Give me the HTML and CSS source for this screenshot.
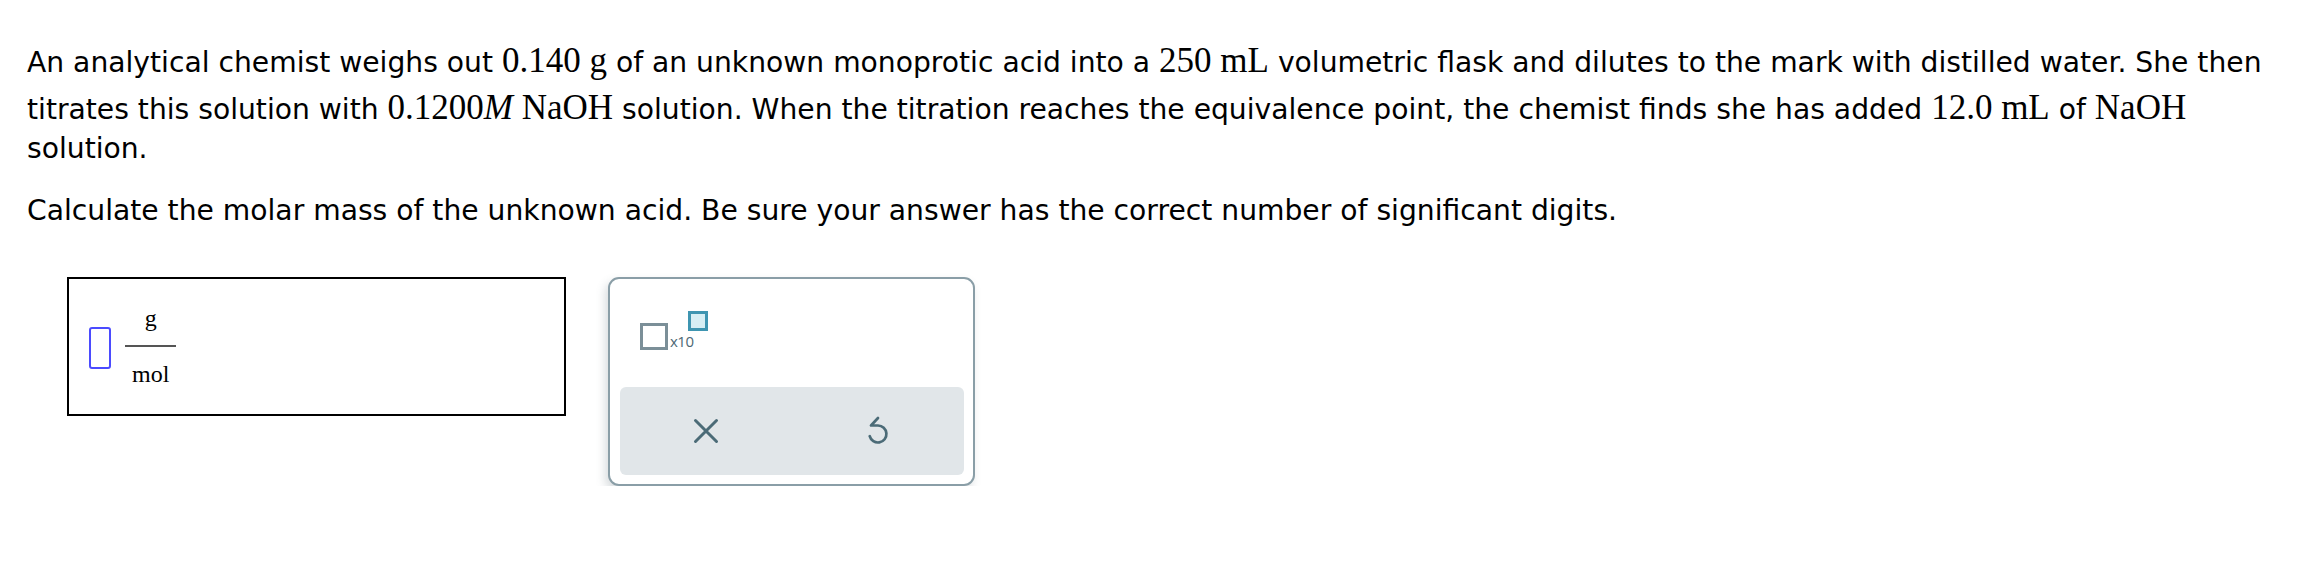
FILE: index.html
```html
<!DOCTYPE html>
<html>
<head>
<meta charset="utf-8">
<link rel="stylesheet" href="styles.css">
</head>
<body>
<div class="page">
  <div class="question">
    <p>An analytical chemist weighs out <span class="m deep">0.140&nbsp;g</span> of an unknown monoprotic acid into a <span class="m">250&nbsp;mL</span> volumetric flask and dilutes to the mark with distilled water. She then titrates this solution with <span class="m">0.1200<i>M</i>&nbsp;NaOH</span> solution. When the titration reaches the equivalence point, the chemist finds she has added <span class="m">12.0&nbsp;mL</span> of <span class="m">NaOH</span> solution.</p>
    <p>Calculate the molar mass of the unknown acid. Be sure your answer has the correct number of significant digits.</p>
  </div>
  <div class="answer-row">
    <div class="answer-box">
      <span class="slot"></span>
      <span class="frac">
        <span class="num">g</span>
        <span class="den">mol</span>
      </span>
    </div>
    <div class="toolbox">
      <div class="tool-top">
        <div class="sci">
          <span class="base-sq"></span>
          <span class="x10">x10</span>
          <span class="exp-sq"></span>
        </div>
      </div>
      <div class="actions">
        <button class="act" aria-label="clear">
          <svg width="26" height="26" viewBox="0 0 26 26"><path d="M2.5 2.5 L23.5 23.5 M23.5 2.5 L2.5 23.5" stroke="#4b6b77" stroke-width="3" stroke-linecap="round" fill="none"/></svg>
        </button>
        <button class="act" aria-label="undo">
          <svg width="30" height="30" viewBox="4.5 4 30 30"><path d="M19.5 6 L12.5 13.5 H19.5 A8.5 8.5 0 1 1 11.2 24.2" stroke="#4b6b77" stroke-width="2.7" stroke-linecap="round" stroke-linejoin="round" fill="none"/></svg>
        </button>
      </div>
    </div>
  </div>
</div>
</body>
</html>
```

FILE: styles.css
```css
html, body {
  margin: 0;
  padding: 0;
  background: #ffffff;
}

.page {
  padding: 43px 27px 0 27px;
  font-family: "DejaVu Sans", Verdana, sans-serif;
  font-size: 28.2px;
  color: #000;
}

.question p {
  margin: 0 0 23px 0;
  line-height: 39px;
}

.m {
  font-family: "Liberation Serif", "Times New Roman", serif;
  font-size: 35px;
  line-height: 1;
}

.m i {
  font-style: italic;
}

.m.deep {
  display: inline-block;
  padding-bottom: 12px;
}

.answer-row {
  display: flex;
  align-items: flex-start;
  margin-top: 47px;
  padding-left: 40px;
  gap: 42px;
}

.answer-box {
  box-sizing: border-box;
  width: 499px;
  height: 139px;
  border: 2px solid #000;
  display: flex;
  align-items: center;
  padding-left: 20px;
}

.slot {
  box-sizing: border-box;
  width: 22px;
  height: 42px;
  border: 2px solid #4b4bff;
  border-radius: 3px;
  margin-top: 3px;
}

.frac {
  display: inline-flex;
  flex-direction: column;
  align-items: stretch;
  margin-left: 14px;
  font-family: "Liberation Serif", "Times New Roman", serif;
  font-size: 24px;
}

.num {
  display: block;
  line-height: 27px;
  padding-bottom: 13px;
  border-bottom: 2px solid #555;
  text-align: center;
}

.den {
  display: block;
  line-height: 27px;
  padding: 14px 7px 0 7px;
  text-align: center;
}

.toolbox {
  box-sizing: border-box;
  width: 367px;
  height: 209px;
  border: 2px solid #8a9ea7;
  border-radius: 11px;
  background: #fff;
  box-shadow: -3px 5px 10px rgba(80, 100, 110, 0.22);
  display: flex;
  flex-direction: column;
  padding: 0 9px 9px 10px;
}

.tool-top {
  flex: 1;
  padding: 32px 0 0 20px;
}

.sci {
  position: relative;
  display: flex;
  align-items: flex-end;
  height: 39px;
}

.base-sq {
  box-sizing: border-box;
  width: 28px;
  height: 27px;
  border: 3px solid #7b8f98;
}

.x10 {
  font-family: "Open Sans", "Liberation Sans", sans-serif;
  font-size: 15px;
  line-height: 15px;
  color: #4d6874;
  margin-left: 2px;
  margin-bottom: 1px;
  letter-spacing: -0.5px;
}

.exp-sq {
  position: absolute;
  left: 48px;
  top: 0;
  box-sizing: border-box;
  width: 20px;
  height: 20px;
  border: 3px solid #3e95b1;
  background: #d6eef4;
}

.actions {
  height: 88px;
  background: #e1e6e9;
  border-radius: 6px;
  display: flex;
}

.act {
  flex: 1;
  border: 0;
  background: transparent;
  padding: 0;
  display: flex;
  align-items: center;
  justify-content: center;
}
```
